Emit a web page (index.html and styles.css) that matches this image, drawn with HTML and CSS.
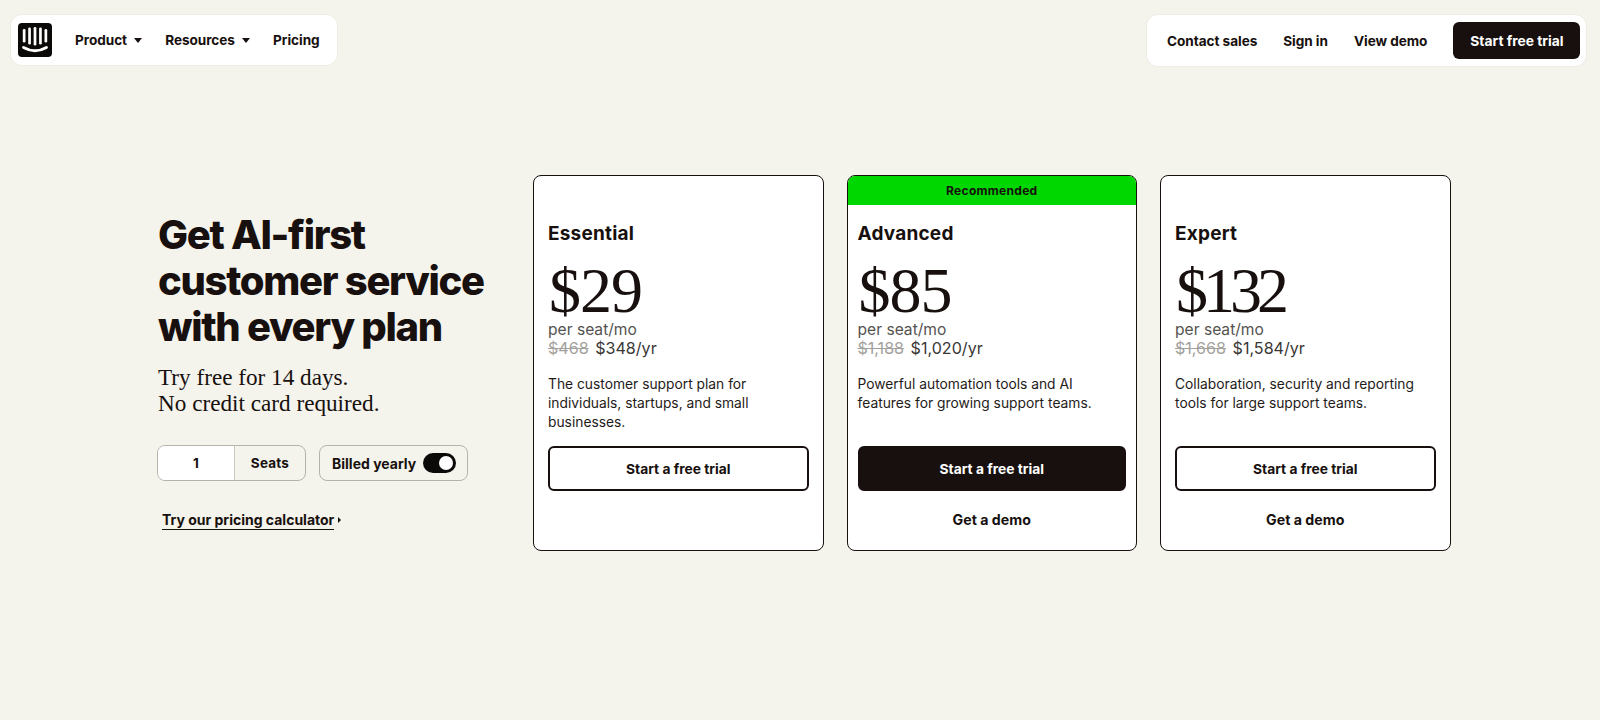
FILE: index.html
```html
<!DOCTYPE html>
<html lang="en">
<head>
<meta charset="utf-8">
<title>Pricing</title>
<link rel="stylesheet" href="styles.css">
</head>
<body>
<header class="top">
  <nav class="pill pill-left">
    <svg class="logo" viewBox="0 0 34 34" aria-label="Intercom logo">
      <rect width="34" height="34" rx="4" fill="#0c0a09"/>
      <g fill="#fff">
        <rect x="4.8" y="6" width="2.7" height="13.5" rx="1.3"/>
        <rect x="10.2" y="4.5" width="2.7" height="17" rx="1.3"/>
        <rect x="15.65" y="4" width="2.7" height="18.5" rx="1.3"/>
        <rect x="21.1" y="4.5" width="2.7" height="17" rx="1.3"/>
        <rect x="26.5" y="6" width="2.7" height="13.5" rx="1.3"/>
      </g>
      <path d="M5.5 24.5Q17 31 28.5 24.5" fill="none" stroke="#fff" stroke-width="2.8" stroke-linecap="round"/>
    </svg>
    <a class="nav-link nav-product">Product <span class="caret"></span></a>
    <a class="nav-link nav-resources">Resources <span class="caret"></span></a>
    <a class="nav-link">Pricing</a>
  </nav>
  <nav class="pill pill-right">
    <a class="nav-link">Contact sales</a>
    <a class="nav-link">Sign in</a>
    <a class="nav-link">View demo</a>
    <a class="nav-cta">Start free trial</a>
  </nav>
</header>
<main class="main">
  <section class="intro">
    <h1 class="headline">Get AI-first<br>customer service<br>with every plan</h1>
    <p class="sub">Try free for 14 days.<br>No credit card required.</p>
    <div class="controls">
      <div class="seats"><span class="seat-num">1</span><span class="seat-label">Seats</span></div>
      <div class="billing"><span>Billed yearly</span><span class="toggle"><span class="knob"></span></span></div>
    </div>
    <a class="calc"><span class="calc-text">Try our pricing calculator</span><span class="calc-arrow"></span></a>
  </section>
  <section class="cards">
    <article class="card">
      <h2 class="plan">Essential</h2>
      <div class="price">$29</div>
      <div class="per">per seat/mo</div>
      <div class="year"><s>$468</s> <span>$348/yr</span></div>
      <p class="desc">The customer support plan for individuals, startups, and small businesses.</p>
      <a class="btn">Start a free trial</a>
    </article>
    <article class="card card-rec">
      <div class="banner">Recommended</div>
      <h2 class="plan">Advanced</h2>
      <div class="price">$85</div>
      <div class="per">per seat/mo</div>
      <div class="year"><s>$1,188</s> <span>$1,020/yr</span></div>
      <p class="desc">Powerful automation tools and AI features for growing support teams.</p>
      <a class="btn btn-dark">Start a free trial</a>
      <a class="demo">Get a demo</a>
    </article>
    <article class="card">
      <h2 class="plan">Expert</h2>
      <div class="price price-tight">$132</div>
      <div class="per">per seat/mo</div>
      <div class="year"><s>$1,668</s> <span>$1,584/yr</span></div>
      <p class="desc">Collaboration, security and reporting tools for large support teams.</p>
      <a class="btn">Start a free trial</a>
      <a class="demo">Get a demo</a>
    </article>
  </section>
</main>
</body>
</html>
```
FILE: styles.css
```css
* { box-sizing: border-box; }
html, body { margin: 0; height: 720px; overflow: hidden; }
body {
  background: #f4f3ec;
  color: #17100e;
  font-family: Inter, "Liberation Sans", sans-serif;
}
.top {
  display: flex;
  justify-content: space-between;
  align-items: flex-start;
  padding: 15px 14px 0 11px;
}
.pill {
  display: flex;
  align-items: center;
  background: #fff;
  border-radius: 11px;
  box-shadow: 0 0 0 1px #eeede6;
}
.pill-left { width: 326px; height: 50px; padding-left: 7px; }
.pill-right { width: 439px; height: 51px; padding: 0 7px 0 20px; gap: 26px; }
.logo { width: 34px; height: 34px; margin-right: 23px; flex: none; }
.nav-link {
  font-size: 13.6px;
  font-weight: 700;
  letter-spacing: -0.05px;
  white-space: nowrap;
}
.nav-product, .nav-resources { margin-right: 23px; }
.caret {
  display: inline-block;
  width: 0;
  height: 0;
  margin-left: 4px;
  vertical-align: 2px;
  border: 4px solid transparent;
  border-top: 5px solid #17100e;
  border-bottom: 0;
}
.nav-cta {
  flex: none;
  margin-left: auto;
  width: 127px;
  height: 37px;
  display: flex;
  align-items: center;
  justify-content: center;
  background: #17100e;
  color: #fff;
  border-radius: 6px;
  font-size: 13.8px;
  font-weight: 700;
}
.main {
  display: flex;
  margin-top: 109px;
  padding-left: 158px;
}
.intro { width: 375px; padding-top: 37px; }
.headline {
  margin: 0;
  font-size: 40px;
  line-height: 46px;
  font-weight: 800;
  letter-spacing: -1.3px;
}
.sub {
  margin: 14px 0 0;
  font-family: "Liberation Serif", serif;
  font-size: 23.2px;
  line-height: 26px;
}
.controls { display: flex; gap: 13px; margin: 29px 0 0 -1px; }
.seats {
  display: flex;
  width: 149px;
  height: 36px;
  border: 1px solid #b5b4ac;
  border-radius: 8px;
  overflow: hidden;
  font-size: 13.5px;
  font-weight: 700;
}
.seat-num {
  width: 77px;
  background: #fff;
  border-right: 1px solid #c9c8c0;
  display: flex;
  align-items: center;
  justify-content: center;
}
.seat-label { flex: 1; display: flex; align-items: center; justify-content: center; letter-spacing: 0.2px; }
.billing {
  display: flex;
  align-items: center;
  justify-content: space-between;
  width: 149px;
  height: 36px;
  padding: 0 11px 0 12px;
  border: 1px solid #b5b4ac;
  border-radius: 8px;
  font-size: 14px;
  font-weight: 700;
  white-space: nowrap;
}
.toggle {
  display: flex;
  align-items: center;
  justify-content: flex-end;
  width: 33px;
  height: 20px;
  padding-right: 3px;
  background: #0c0a09;
  border-radius: 10px;
}
.knob { width: 14px; height: 14px; background: #fff; border-radius: 50%; }
.calc {
  display: inline-flex;
  align-items: center;
  gap: 4px;
  margin: 29px 0 0 4px;
  font-size: 14px;
  font-weight: 700;
}
.calc-text { border-bottom: 1.5px solid #17100e; line-height: 19px; }
.calc-arrow {
  width: 0;
  height: 0;
  border: 3px solid transparent;
  border-left: 3.5px solid #17100e;
  border-right: 0;
}
.cards {
  display: grid;
  grid-template-columns: repeat(3, 290.5px);
  column-gap: 23px;
}
.card {
  position: relative;
  display: flex;
  flex-direction: column;
  height: 376px;
  padding: 44px 14px 0;
  background: #fff;
  border: 1px solid #17100e;
  border-radius: 8px;
  overflow: hidden;
}
.card-rec { padding-left: 10px; padding-right: 10px; }
.banner {
  position: absolute;
  top: 0;
  left: 0;
  right: 0;
  height: 29px;
  display: flex;
  align-items: center;
  justify-content: center;
  background: #00d600;
  font-size: 12px;
  font-weight: 700;
  letter-spacing: 0.3px;
}
.plan { margin: 0; font-size: 19px; line-height: 28px; font-weight: 700; letter-spacing: 0.2px; }
.price {
  margin: 14px 0 0 1px;
  font-family: "Liberation Serif", serif;
  font-size: 64px;
  line-height: 58px;
  letter-spacing: -1px;
}
.price-tight { letter-spacing: -5px; }
.per { font-size: 15.6px; line-height: 19px; color: #555350; }
.year { font-size: 16.1px; line-height: 19.5px; color: #3a3735; }
.year s { color: #a3a19d; margin-right: 2px; }
.desc {
  height: 57px;
  margin: 16px 0 14.5px;
  font-size: 13.8px;
  line-height: 19px;
  color: #1f1b19;
}
.btn {
  flex: none;
  height: 45px;
  display: flex;
  align-items: center;
  justify-content: center;
  border: 2px solid #17100e;
  border-radius: 6px;
  font-size: 13.8px;
  font-weight: 700;
}
.btn-dark { background: #17100e; color: #fff; }
.demo {
  margin-top: 17px;
  text-align: center;
  font-size: 14.2px;
  line-height: 24px;
  font-weight: 700;
}
```
